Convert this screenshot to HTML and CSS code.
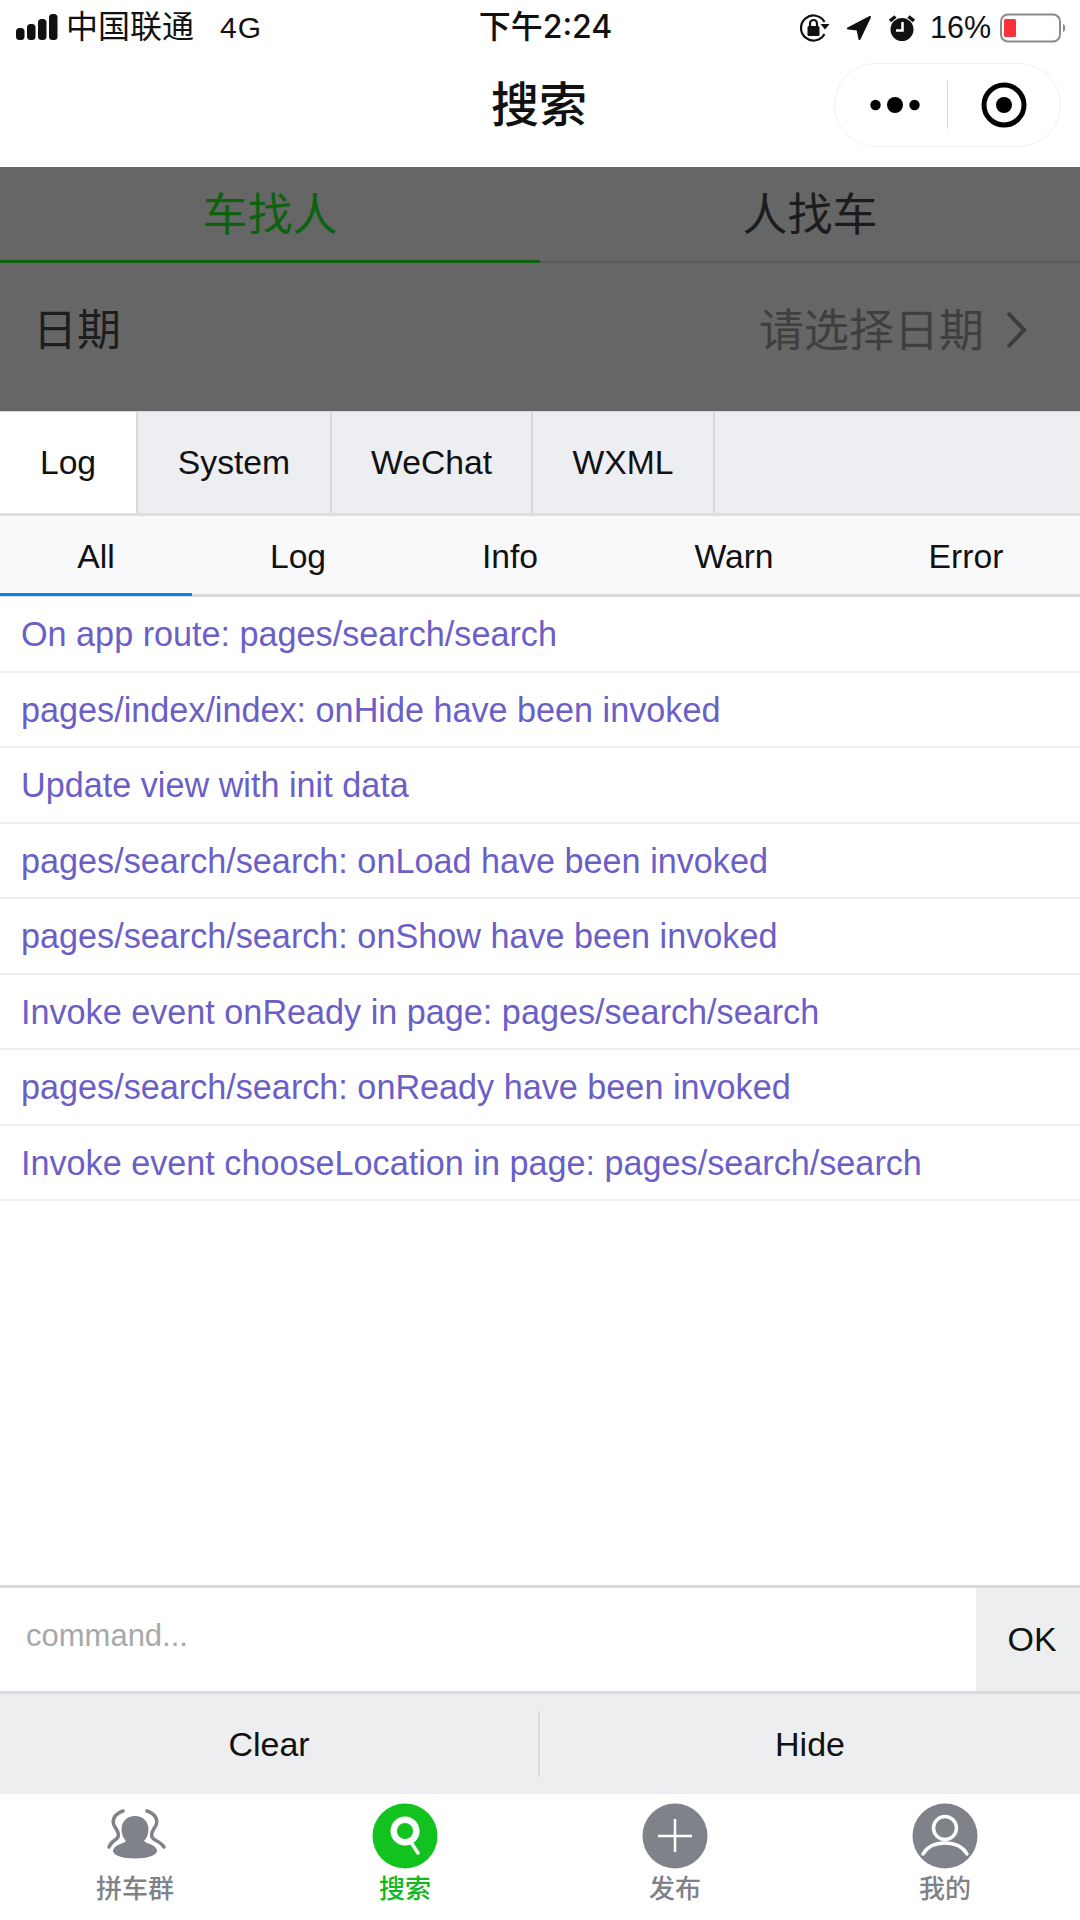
FILE: index.html
```html
<!DOCTYPE html>
<html lang="zh">
<head>
<meta charset="utf-8">
<title>搜索</title>
<link rel="stylesheet" href="styles.css">
</head>
<body>
<div class="page">
  <div class="status">
    <div class="status-left">
      <svg class="signal" width="42" height="26" viewBox="0 0 42 26"><rect x="0" y="14" width="8.500" height="12" rx="3.500"/><rect x="11" y="10" width="8.500" height="16" rx="3.500"/><rect x="22" y="5" width="8.500" height="21" rx="3.500"/><rect x="33" y="0" width="8.500" height="26" rx="3.500"/></svg>
      <span class="carrier">中国联通</span>
      <span class="net">4G</span>
    </div>
    <div class="status-time">下午2:24</div>
    <div class="status-right">
      <svg class="ic-lock" width="30" height="28" viewBox="0 0 30 28"><path d="M24.500 20A12.500 12.500 0 1 1 24.500 8" fill="none" stroke="#111" stroke-width="2.200"/><path d="M20.500 10h9l-4.500 5.500z" fill="#111"/><rect x="7.500" y="12" width="12" height="10" rx="1.500" fill="#111"/><path d="M10 12V9.500a3.500 3.500 0 0 1 7 0V12" fill="none" stroke="#111" stroke-width="2.200"/></svg>
      <svg class="ic-loc" width="24" height="24" viewBox="0 0 24 24"><path d="M1 12.500 23 1 12.500 23 10.500 13.500z" fill="#111" stroke="#111" stroke-linejoin="round" stroke-width="2"/></svg>
      <svg class="ic-alarm" width="26" height="26" viewBox="0 0 26 26"><circle cx="13" cy="14.500" r="11.500" fill="#111"/><path d="M1 6l5.500-4.500M25 6l-5.500-4.500" stroke="#111" stroke-width="3.500" fill="none"/><path d="M13.500 7v8.500H7" stroke="#fff" stroke-width="2.500" fill="none"/></svg>
      <span class="pct">16%</span>
      <svg class="ic-batt" width="67" height="30" viewBox="0 0 67 30"><rect x="1" y="1.500" width="59" height="27" rx="7" fill="#fff" stroke="#8a8a8a" stroke-width="2"/><rect x="4" y="6" width="12" height="18" rx="1.500" fill="#fc3038"/><path d="M63 11c3 1 3 7 0 8z" fill="#8a8a8a"/></svg>
    </div>
  </div>

  <div class="navbar">
    <div class="nav-title">搜索</div>
    <div class="capsule">
      <svg class="dots" width="50" height="20" viewBox="0 0 50 20"><circle cx="5.500" cy="10" r="5.200"/><circle cx="25" cy="10" r="8"/><circle cx="44.500" cy="10" r="5.200"/></svg>
      <span class="capsule-sep"></span>
      <svg class="target" width="46" height="46" viewBox="0 0 46 46"><circle cx="23" cy="23" r="20" fill="none" stroke="#000" stroke-width="5"/><circle cx="23" cy="23" r="8"/></svg>
    </div>
  </div>

  <div class="dimmed">
    <div class="mode-tabs">
      <div class="mode-tab active">车找人</div>
      <div class="mode-tab">人找车</div>
    </div>
    <div class="date-row">
      <span class="date-label">日期</span>
      <span class="date-value">请选择日期
        <svg class="chev" width="22" height="38" viewBox="0 0 22 38"><path d="M3 2 19 19 3 36" fill="none" stroke="#3c3c3c" stroke-width="4"/></svg>
      </span>
    </div>
  </div>

  <div class="vc-tabs">
    <div class="vc-tab current tab-log">Log</div>
    <div class="vc-tab tab-system">System</div>
    <div class="vc-tab tab-wechat">WeChat</div>
    <div class="vc-tab tab-wxml">WXML</div>
  </div>

  <div class="vc-sub">
    <div class="vc-subtab current sub-all">All</div>
    <div class="vc-subtab sub-log">Log</div>
    <div class="vc-subtab sub-info">Info</div>
    <div class="vc-subtab sub-warn">Warn</div>
    <div class="vc-subtab sub-error">Error</div>
  </div>

  <div class="vc-logs">
    <div class="log-row">On app route: pages/search/search</div>
    <div class="log-row">pages/index/index: onHide have been invoked</div>
    <div class="log-row">Update view with init data</div>
    <div class="log-row">pages/search/search: onLoad have been invoked</div>
    <div class="log-row">pages/search/search: onShow have been invoked</div>
    <div class="log-row">Invoke event onReady in page: pages/search/search</div>
    <div class="log-row">pages/search/search: onReady have been invoked</div>
    <div class="log-row">Invoke event chooseLocation in page: pages/search/search</div>
  </div>

  <div class="vc-cmd">
    <div class="cmd-input">command...</div>
    <div class="cmd-ok">OK</div>
  </div>

  <div class="vc-foot">
    <div class="foot-btn">Clear</div>
    <div class="foot-btn">Hide</div>
  </div>

  <div class="tabbar">
    <div class="bar-item">
      <svg class="bar-icon" width="66" height="66" viewBox="0 0 66 66"><path d="M33 13c8.500 0 13.500 6 13.500 13.500 0 5-2 9-4.500 11.500 2 2 5 2.500 8 4 3 1.500 5 3.500 5 6 0 4-9 7.500-22 7.500s-22-3.500-22-7.500c0-2.500 2-4.500 5-6 3-1.500 6-2 8-4-2.500-2.500-4.500-6.500-4.500-11.500C19.500 19 24.500 13 33 13z" fill="#7f8289"/><path d="M21 8C12 11 9 18 13 24 17 30 18 34 13 37 10 39 8 41 7 44M45 8C54 11 57 18 53 24 49 30 48 34 53 37 57 39 60 41 62 44" fill="none" stroke="#7f8289" stroke-width="3.500" stroke-linecap="round"/></svg>
      <span class="bar-label">拼车群</span>
    </div>
    <div class="bar-item on">
      <svg class="bar-icon" width="66" height="66" viewBox="0 0 66 66"><circle cx="33" cy="33" r="32.500" fill="#12c21f"/><circle cx="33" cy="28" r="11.300" fill="none" stroke="#fff" stroke-width="6.500"/><path d="M39.500 40 46 50" stroke="#fff" stroke-width="3.500" stroke-linecap="round"/></svg>
      <span class="bar-label">搜索</span>
    </div>
    <div class="bar-item">
      <svg class="bar-icon" width="66" height="66" viewBox="0 0 66 66"><circle cx="33" cy="33" r="32.500" fill="#7f8389"/><path d="M33 16V49M16 33H50" stroke="#fff" stroke-width="2.500"/></svg>
      <span class="bar-label">发布</span>
    </div>
    <div class="bar-item">
      <svg class="bar-icon" width="66" height="66" viewBox="0 0 66 66"><circle cx="33" cy="33" r="32.500" fill="#7f8389"/><circle cx="33" cy="25" r="11.500" fill="none" stroke="#fff" stroke-width="3.500"/><path d="M11 51c4-7 12-11 22-11s18 4 22 11" fill="none" stroke="#fff" stroke-width="3.500" stroke-linecap="round"/></svg>
      <span class="bar-label">我的</span>
    </div>
  </div>
</div>
</body>
</html>
```
FILE: styles.css
```css
* { box-sizing: border-box; }
html, body { margin: 0; padding: 0; }
body {
  width: 1080px;
  height: 1920px;
  overflow: hidden;
  background: #fff;
  font-family: "Liberation Sans", "Noto Sans CJK SC", sans-serif;
  color: #000;
}
.page { width: 1080px; height: 1920px; display: flex; flex-direction: column; }

.status { height: 55px; flex: none; display: grid; grid-template-columns: 1fr auto 1fr; align-items: center; padding: 0 13px 0 16px; color: #111; }
.status-left { display: flex; align-items: center; }
.signal { fill: #111; margin-top: -2px; }
.carrier { font-size: 32px; line-height: 40px; margin-left: 8px; margin-top: -2px; }
.net { font-size: 30px; margin-left: 26px; letter-spacing: 1px; }
.status-time { font-family: "Inter", "Noto Sans CJK SC", sans-serif; font-size: 32px; line-height: 40px; font-weight: 500; padding-left: 8px; margin-top: -2px; }
.status-right { display: flex; align-items: center; justify-content: flex-end; }
.ic-loc { margin-left: 17px; }
.ic-alarm { margin-left: 18px; }
.pct { font-size: 30.500px; margin-left: 15px; }
.ic-batt { margin-left: 9px; }

.navbar { height: 112px; flex: none; position: relative; display: flex; align-items: center; justify-content: center; padding-bottom: 10px; }
.nav-title { font-size: 48px; line-height: 60px; font-weight: 500; color: #111; margin-right: 2px; }
.capsule {
  position: absolute;
  right: 19px;
  top: 8px;
  width: 227px;
  height: 84px;
  border: 1px solid #f0f0f0;
  border-radius: 42px;
  display: flex;
  align-items: center;
}
.dots { margin-left: 35px; fill: #000; }
.capsule-sep { width: 1px; height: 48px; background: #d8d8d8; margin-left: 27px; }
.target { margin-left: 33px; fill: #000; }

.dimmed { height: 244px; flex: none; background: #666; display: flex; flex-direction: column; }
.mode-tabs { display: flex; height: 96px; flex: none; border-bottom: 2px solid #5c5c5c; }
.mode-tab { flex: 1; display: flex; align-items: center; justify-content: center; font-size: 45px; color: #1c1c1c; padding-bottom: 7px; margin-bottom: -2px; }
.mode-tab.active { color: #0e620f; box-shadow: inset 0 -3px 0 #0e620f; }
.date-row { flex: 1; display: flex; align-items: center; justify-content: space-between; padding: 0 53px 20px 33px; }
.date-label { font-size: 44px; color: #1e1e1e; }
.date-value { font-size: 45px; color: #3f3f3f; display: flex; align-items: center; gap: 21px; }
.chev { margin-top: 6px; }

.vc-tabs { height: 105px; flex: none; display: flex; background: #edeef1; border-top: 1px solid #d9d9d9; border-bottom: 3px solid #dedede; }
.vc-tab { display: flex; align-items: center; justify-content: center; font-size: 33.700px; border-right: 2px solid #d9d9da; color: #111; }
.vc-tab.current { background: #fff; }
.tab-log { width: 138px; }
.tab-system { width: 194px; }
.tab-wechat { width: 201px; }
.tab-wxml { width: 182px; }

.vc-sub { height: 81px; flex: none; display: flex; background: #f9f9fc; border-bottom: 3px solid #d9d9d9; position: relative; }
.vc-subtab { display: flex; align-items: center; justify-content: center; font-size: 33.700px; color: #111; padding-top: 3px; }
.sub-all { width: 192px; }
.sub-log { width: 212px; }
.sub-info { width: 212px; }
.sub-warn { width: 236px; }
.sub-error { width: 228px; }
.vc-subtab.current { position: relative; }
.vc-subtab.current::after { content: ""; position: absolute; left: 0; right: 0; bottom: -2px; height: 3px; background: #0a84e0; }

.vc-logs { flex: 1; min-height: 0; }
.log-row { height: 75.500px; display: flex; align-items: center; padding: 2px 21px 0; font-size: 34.200px; color: #6b5fc7; border-bottom: 2px solid #eeeeee; white-space: nowrap; }

.vc-cmd { height: 109px; flex: none; display: flex; border-top: 3px solid #d9d9d9; border-bottom: 3px solid #d9d9e0; }
.cmd-input { flex: 1; display: flex; align-items: center; padding: 0 26px 8px; font-size: 31px; color: #a8a8a8; }
.cmd-ok { width: 104px; display: flex; align-items: center; justify-content: center; font-size: 34px; color: #111; background: #edeef0; padding-left: 8px; }

.vc-foot { height: 100px; flex: none; display: grid; grid-template-columns: 1fr 1fr; background: #edeef0; align-items: center; }
.foot-btn { height: 66px; display: flex; align-items: center; justify-content: center; font-size: 34px; color: #111; }
.foot-btn:first-child { border-right: 2px solid #dcdcdc; }

.tabbar { height: 126px; flex: none; display: flex; background: #fff; }
.bar-item { flex: 1; display: flex; flex-direction: column; align-items: center; padding-top: 9px; color: #7f8289; }
.bar-label { font-size: 26px; line-height: 30px; margin-top: 5px; font-weight: 500; }
.bar-item.on { color: #12b822; }
```
